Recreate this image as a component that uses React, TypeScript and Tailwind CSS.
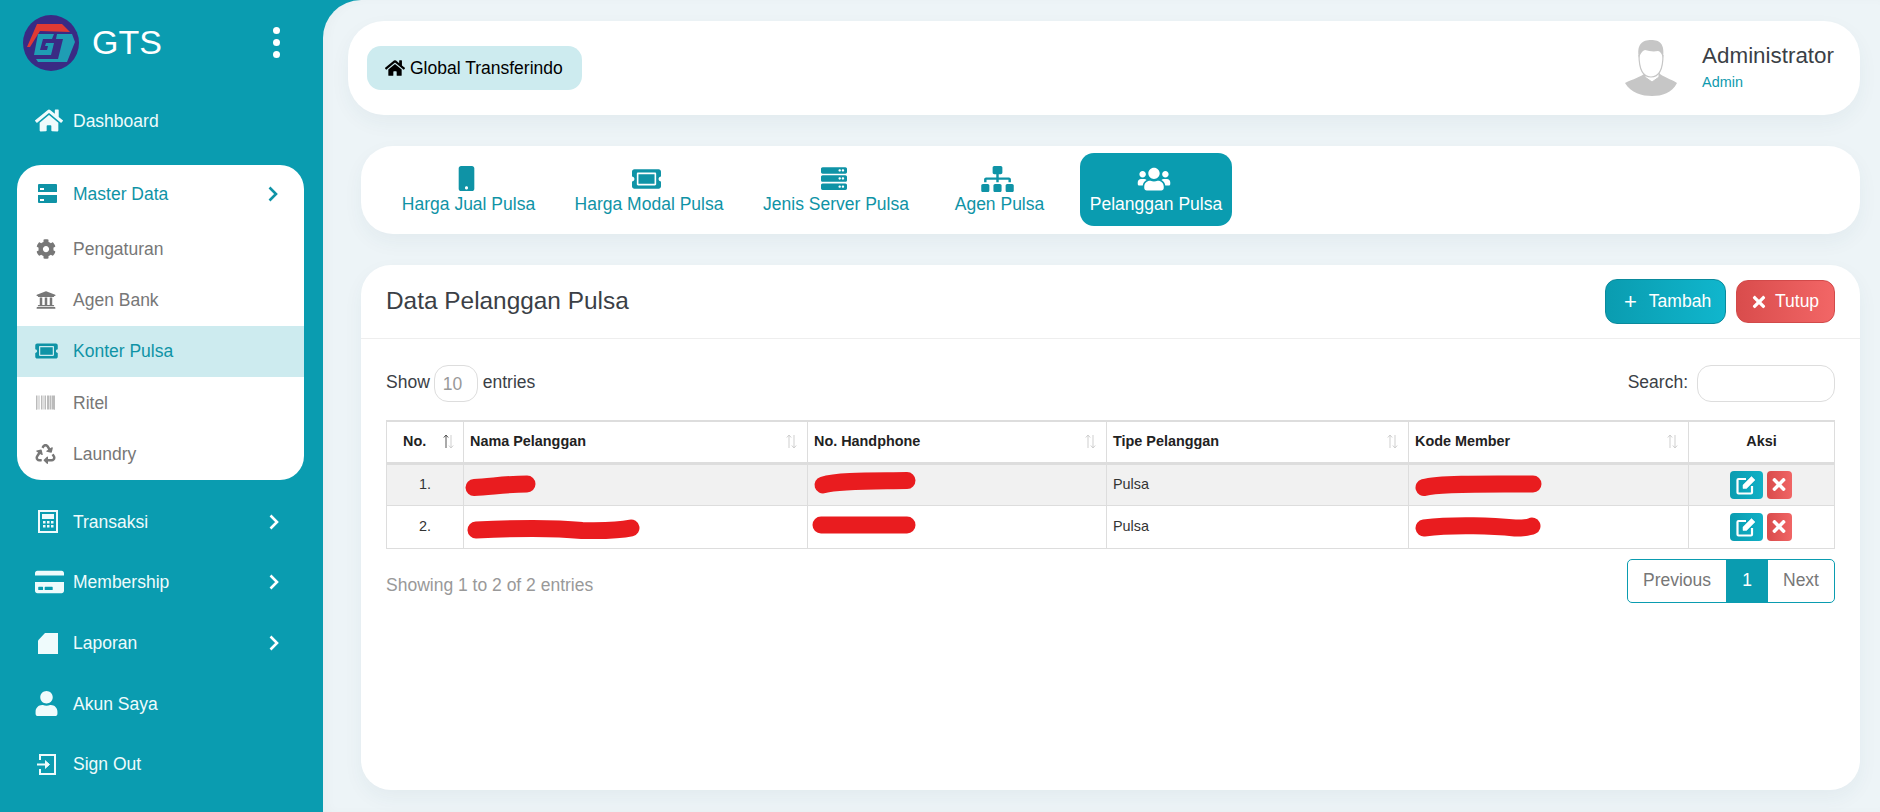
import type { ReactNode } from 'react'
import {
  FaHome, FaCog, FaUniversity, FaTicketAlt, FaBarcode, FaRecycle, FaCreditCard, FaUser,
  FaMobile, FaServer, FaSitemap, FaUsers, FaTimes,
} from 'react-icons/fa'

const HddIcon = () => (
  <svg viewBox="0 0 19 19" className="ml-[3px] w-[19px] h-[19px]" fill="currentColor">
    <path fillRule="evenodd" d="M1 0h17a1 1 0 0 1 1 1v7H0V1a1 1 0 0 1 1-1Zm1 4v2h4V4H2ZM0 11h19v7a1 1 0 0 1-1 1H1a1 1 0 0 1-1-1v-7Zm2 4v2h4v-2H2Z" />
  </svg>
)

const CalcIcon = () => (
  <svg viewBox="0 0 20 23" className="ml-[3px] w-[20px] h-[23px]" fill="currentColor">
    <path fillRule="evenodd" d="M0 0h20v23H0V0Zm2 2v19h16V2H2Z" />
    <path d="M4 4h12v5H4zM5 11h2.500v2.500H5zM9 11h2.500v2.500H9zM13 11h2.500v2.500H13zM5 15h2.500v2.500H5zM9 15h2.500v2.500H9zM13 15h2.500v2.500H13z" />
  </svg>
)

const NoteIcon = () => (
  <svg viewBox="0 0 20 21" className="ml-[3px] w-[20px] h-[21px]" fill="currentColor">
    <path d="M7 0h13v21H0V7.500L7 0Z" />
  </svg>
)

const SignOutIcon = () => (
  <svg viewBox="0 0 20 21" className="ml-[2px] w-[20px] h-[21px]" fill="none" stroke="currentColor" strokeWidth="2">
    <path d="M3 6V1h15v19H3v-5" />
    <path d="M0 10.500h11" />
    <path d="M8 6.500l4.500 4-4.500 4" fill="currentColor" strokeWidth="1" />
  </svg>
)

const EditIcon = () => (
  <svg viewBox="0 0 20 20" className="w-[20px] h-[20px]" fill="none" stroke="currentColor">
    <path d="M10 4H2.500a1 1 0 0 0-1 1v12.500a1 1 0 0 0 1 1H15a1 1 0 0 0 1-1V11" strokeWidth="2.200" />
    <path d="M7 10 15.500 1.500l3.500 3.500L10.500 13.500H7V10Z" fill="currentColor" strokeWidth="0.500" />
  </svg>
)

const Chevron = ({ className }: { className: string }) => (
  <svg viewBox="0 0 10 16" className={`ml-auto w-[10px] h-[16px] ${className}`} fill="none" stroke="currentColor" strokeWidth="2.600">
    <path d="M1.500 1.500 8 8l-6.500 6.500" />
  </svg>
)

const Logo = () => (
  <svg viewBox="0 0 56 56" className="w-[56px] h-[56px] shrink-0">
    <circle cx="28" cy="28" r="28" fill="#3a2a84" />
    <path d="M4 32 14 9h25l8 8-30-1L7 32Z" fill="#e03a33" />
    <path d="M15 19h16l-2 5H20l-3 11h7l1-4h-3l1-3h8l-3 12H11Z" fill="#1f9db4" />
    <path d="M34 19h15l3 8-8 20H15l-2-3h22l5-20h-7Z" fill="#1f9db4" />
  </svg>
)

const Avatar = () => (
  <svg viewBox="0 0 75 70" className="w-[75px] h-[70px] shrink-0">
    <path d="M10 50c8-4 16-6 20-10l7 8 7-8c4 4 12 6 18 10-5 10-15 13-25 13S16 60 10 50Z" fill="#c6c6c6" />
    <path d="M30 38v6l7 5 7-5v-6" fill="#fff" stroke="#c6c6c6" strokeWidth="1" />
    <path d="M24 22c0 17 6 22 12 22s12-5 12-22" fill="#fff" stroke="#c6c6c6" strokeWidth="1.200" />
    <path d="M24 25C21 11 28 7 36 7c9 0 14 4 12 18-1-4-3-7-5-7-5 1-9 0-13-1-3 1-5 4-6 8Z" fill="#c6c6c6" />
  </svg>
)

const SortArrows = ({ up = '#cfcfcf' }: { up?: string }) => (
  <svg viewBox="0 0 11 15" className="w-[11px] h-[15px] shrink-0" fill="none" strokeWidth="1">
    <path d="M3 14V1M.800 3.500 3 1l2.200 2.500" stroke={up} />
    <path d="M8 1v13M5.800 11.500 8 14l2.200-2.500" stroke="#cfcfcf" />
  </svg>
)

// coretan merah yang menutupi data pelanggan
const Scribble = ({ w, h, d, className }: { w: number; h: number; d: string; className: string }) => (
  <svg width={w} height={h} viewBox={`0 0 ${w} ${h}`} className={`block overflow-visible ${className}`} fill="none" stroke="#e91c1f" strokeWidth="17" strokeLinecap="round">
    <path d={d} />
  </svg>
)

type NavItem = { label: string; icon: ReactNode; arrow?: boolean }

const mainTop: NavItem = { label: 'Dashboard', icon: <FaHome className="w-[28px] h-[25px]" /> }

const masterItems: (NavItem & { active?: boolean })[] = [
  { label: 'Pengaturan', icon: <FaCog className="ml-[1px] w-[20px] h-[20px]" /> },
  { label: 'Agen Bank', icon: <FaUniversity className="ml-[1px] w-[20px] h-[20px]" /> },
  { label: 'Konter Pulsa', icon: <FaTicketAlt className="w-[23px] h-[20px]" />, active: true },
  { label: 'Ritel', icon: <FaBarcode className="w-[21px] h-[19px] text-[#999]" /> },
  { label: 'Laundry', icon: <FaRecycle className="w-[21px] h-[20px]" /> },
]

const bottomItems: NavItem[] = [
  { label: 'Transaksi', icon: <CalcIcon />, arrow: true },
  { label: 'Membership', icon: <FaCreditCard className="w-[29px] h-[26px]" />, arrow: true },
  { label: 'Laporan', icon: <NoteIcon />, arrow: true },
  { label: 'Akun Saya', icon: <FaUser className="w-[23px] h-[25px]" /> },
  { label: 'Sign Out', icon: <SignOutIcon /> },
]

const tabs = [
  { label: 'Harga Jual Pulsa', icon: <FaMobile className="w-[17px] h-[25px]" />, width: 'w-[153px]' },
  { label: 'Harga Modal Pulsa', icon: <FaTicketAlt className="w-[29px] h-[26px]" />, width: 'w-[168px]' },
  { label: 'Jenis Server Pulsa', icon: <FaServer className="w-[26px] h-[27px]" />, width: 'w-[166px]' },
  { label: 'Agen Pulsa', icon: <FaSitemap className="w-[33px] h-[26px]" />, width: 'w-[121px]' },
  { label: 'Pelanggan Pulsa', icon: <FaUsers className="w-[34px] h-[26px]" />, width: 'w-[152px]', active: true },
]

const columns = [
  { label: 'Nama Pelanggan', width: 'w-[344px]' },
  { label: 'No. Handphone', width: 'w-[299px]' },
  { label: 'Tipe Pelanggan', width: 'w-[302px]' },
  { label: 'Kode Member', width: 'w-[280px]' },
]

const rows = [
  {
    no: '1.',
    striped: true,
    height: 'h-[42px]',
    name: <Scribble w={71} h={19} d="M9 11.500C25 11 40 8 62 8" className="ml-[1px] mt-[2px]" />,
    phone: <Scribble w={102} h={21} d="M9 13C25 8 60 9 93 8.500" className="ml-[6px] -mt-[4px]" />,
    code: <Scribble w={127} h={19} d="M9 11.500C25 7 80 8 118 8" className="ml-[6px] mt-[2px]" />,
  },
  {
    no: '2.',
    striped: false,
    height: 'h-[43px]',
    name: <Scribble w={173} h={19} d="M9 11C50 9 90 9 115 11.500 140 12 155 11 164 9" className="ml-[3px] mt-[4px]" />,
    phone: <Scribble w={104} h={16} d="M9 8H95" className="ml-[4px] -mt-[3px]" />,
    code: <Scribble w={126} h={19} d="M9 11C40 7 80 9 100 11 110 11 115 10 117 9" className="ml-[6px]" />,
  },
]

const NavRow = ({ item }: { item: NavItem }) => (
  <div className="flex h-[60.7px] items-center pl-[35px] pr-[44px] text-[#effbfc]">
    <div className="flex w-[38px] shrink-0 items-center">{item.icon}</div>
    <span>{item.label}</span>
    {item.arrow && <Chevron className="text-white" />}
  </div>
)

export default function App() {
  return (
    <div className="flex h-[812px] w-[1880px] overflow-hidden bg-[#0a9cb0] font-['Liberation_Sans',Arial,sans-serif] text-[17.5px]">
      {/* Sidebar */}
      <aside className="w-[323px] shrink-0">
        <div className="flex h-[90.500px] items-start pl-[23px] pr-[43px] pt-[15px]">
          <Logo />
          <span className="ml-[13px] mt-[7px] text-[34px] leading-[40px] text-white">GTS</span>
          <div className="ml-auto mt-[12px] flex flex-col gap-[5px]">
            <span className="h-[7px] w-[7px] rounded-full bg-white" />
            <span className="h-[7px] w-[7px] rounded-full bg-white" />
            <span className="h-[7px] w-[7px] rounded-full bg-white" />
          </div>
        </div>
        <NavRow item={mainTop} />
        <div className="mx-[17px] mt-[13.800px] w-[287px] overflow-hidden rounded-[24px] bg-white">
          <div className="flex h-[58px] items-center pl-[18px] pr-[26px] text-[#0f93a6]">
            <div className="flex w-[38px] shrink-0 items-center"><HddIcon /></div>
            <span>Master Data</span>
            <Chevron className="text-[#0f93a6]" />
          </div>
          {masterItems.map(m => (
            <div
              key={m.label}
              className={`flex h-[51.4px] items-center pl-[18px] ${m.active ? 'bg-[#cdebef] text-[#0f93a6]' : 'text-[#777]'}`}
            >
              <div className="flex w-[38px] shrink-0 items-center">{m.icon}</div>
              <span>{m.label}</span>
            </div>
          ))}
        </div>
        <div className="mt-[11.500px]">
          {bottomItems.map(b => <NavRow key={b.label} item={b} />)}
        </div>
      </aside>

      {/* Content */}
      <main className="min-w-0 flex-1 rounded-tl-[38px] bg-[#edf4f7] pl-[25px] pr-[20px] pt-[21px] shadow-[inset_6px_0_10px_rgba(0,0,0,0.02)]">
        <header className="flex h-[94px] items-center justify-between rounded-[36px] bg-white pl-[19px] pr-[26px] shadow-[0_8px_20px_rgba(40,80,100,0.05)]">
          <div className="flex h-[44px] w-[215px] items-center rounded-[14px] bg-[#cdebef] pl-[18px] text-black">
            <FaHome className="mr-[5px] h-[18px] w-[20px]" />
            Global Transferindo
          </div>
          <div className="flex items-center">
            <Avatar />
            <div className="ml-[12px] -mt-[2px]">
              <div className="text-[22.4px] leading-[26px] text-[#3b3f46]">Administrator</div>
              <div className="mt-[4px] text-[14.4px] leading-[18px] text-[#0f9aae]">Admin</div>
            </div>
          </div>
        </header>

        <nav className="ml-[13px] mt-[31px] flex h-[88px] items-start gap-[20px] rounded-[32px] bg-white pl-[31px] pt-[7px] shadow-[0_8px_20px_rgba(40,80,100,0.05)]">
          {tabs.map(t => (
            <div
              key={t.label}
              className={`flex h-[73px] flex-col items-center rounded-[14px] pt-[12px] ${t.width} ${t.active ? 'bg-[#0a9cb0] text-white' : 'text-[#0f93a6]'}`}
            >
              <div className="flex h-[27px] items-center pr-[5px]">{t.icon}</div>
              <span className="mt-[2px] leading-[20px]">{t.label}</span>
            </div>
          ))}
        </nav>

        <section className="ml-[13px] mt-[31px] h-[525px] rounded-[30px] bg-white shadow-[0_8px_20px_rgba(40,80,100,0.05)]">
          <div className="flex h-[74px] items-center justify-between border-b border-[#eeeeee] pl-[25px] pr-[25px]">
            <h2 className="text-[24.4px] text-[#3b3f46]">Data Pelanggan Pulsa</h2>
            <div className="flex items-center gap-[10px]">
              <button className="flex h-[45px] w-[121px] items-center rounded-[12px] border border-[#0a8a9c] bg-linear-to-r from-[#0a9cb0] to-[#10b6cd] pl-[18px] text-white">
                <span className="mr-[12px] text-[22px] font-light leading-none">+</span>
                Tambah
              </button>
              <button className="flex h-[43px] w-[99px] items-center rounded-[12px] border border-[#d24a4a] bg-linear-to-r from-[#d94c4c] to-[#f26666] pl-[15px] text-white">
                <FaTimes className="mr-[9px] h-[18px] w-[14px]" />
                Tutup
              </button>
            </div>
          </div>

          <div className="px-[25px] pt-[26px]">
            <div className="flex h-[37px] items-center justify-between text-[#3b3f46]">
              <div className="flex items-center">
                <span className="-mt-[2px]">Show</span>
                <div className="ml-[4px] mr-[5px] flex h-[37px] w-[44px] items-center rounded-[14px] border border-[#dddddd] pl-[8px] pt-[1px] text-[#999]">10</div>
                <span className="-mt-[2px]">entries</span>
              </div>
              <div className="flex items-center">
                <span className="-mt-[2px]">Search:</span>
                <input className="ml-[9px] h-[37px] w-[138px] rounded-[14px] border border-[#dddddd] bg-white" />
              </div>
            </div>

            <table className="mt-[18px] w-[1449px] table-fixed border-collapse text-[14.4px]">
              <thead>
                <tr className="h-[42px] border-b-[3px] border-t-2 border-[#dddddd] text-[#222]">
                  <th className="w-[77px] border-x border-[#dddddd] p-0 font-bold">
                    <div className="flex items-center justify-between pl-[16px] pr-[9px]">
                      No.
                      <SortArrows up="#555" />
                    </div>
                  </th>
                  {columns.map(c => (
                    <th key={c.label} className={`border-x border-[#dddddd] p-0 text-left font-bold ${c.width}`}>
                      <div className="flex items-center justify-between pl-[6px] pr-[10px]">
                        {c.label}
                        <SortArrows />
                      </div>
                    </th>
                  ))}
                  <th className="border-x border-[#dddddd] p-0 text-center font-bold">Aksi</th>
                </tr>
              </thead>
              <tbody className="text-[#333]">
                {rows.map(r => (
                  <tr key={r.no} className={`border-b border-[#dddddd] ${r.height} ${r.striped ? 'bg-[#f1f1f1]' : 'bg-white'}`}>
                    <td className="border-x border-[#dddddd] p-0 text-center">{r.no}</td>
                    <td className="border-x border-[#dddddd] p-0">{r.name}</td>
                    <td className="border-x border-[#dddddd] p-0">{r.phone}</td>
                    <td className="border-x border-[#dddddd] p-0 pl-[6px]">Pulsa</td>
                    <td className="border-x border-[#dddddd] p-0">{r.code}</td>
                    <td className="border-x border-[#dddddd] p-0">
                      <div className="flex items-center justify-center gap-[4px] pr-[2px]">
                        <span className="flex h-[28px] w-[33px] items-center justify-center rounded-[4px] bg-linear-to-r from-[#0a9cb0] to-[#10b0c6] text-white">
                          <EditIcon />
                        </span>
                        <span className="flex h-[28px] w-[25px] items-center justify-center rounded-[4px] bg-linear-to-r from-[#d94c4c] to-[#f06565] text-white">
                          <FaTimes className="h-[19px] w-[14px]" />
                        </span>
                      </div>
                    </td>
                  </tr>
                ))}
              </tbody>
            </table>

            <div className="mt-[10px] flex items-start justify-between">
              <span className="mt-[16px] text-[#999] leading-[20px]">Showing 1 to 2 of 2 entries</span>
              <div className="flex h-[44px] w-[208px] overflow-hidden rounded-[5px] border border-[#0a9cb0] text-[#777]">
                <span className="flex w-[98px] items-center justify-center">Previous</span>
                <span className="flex w-[42px] items-center justify-center bg-[#0a9cb0] text-white">1</span>
                <span className="flex flex-1 items-center justify-center">Next</span>
              </div>
            </div>
          </div>
        </section>
      </main>
    </div>
  )
}
